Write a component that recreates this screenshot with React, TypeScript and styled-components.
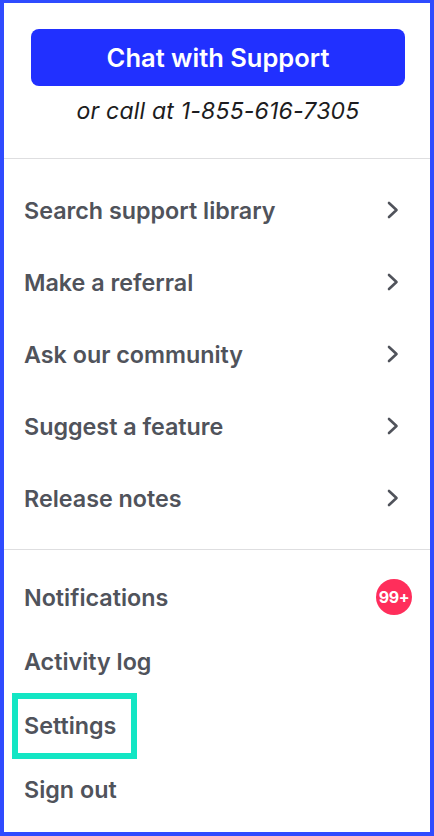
import React from 'react';
import styled, { createGlobalStyle } from 'styled-components';

const GlobalStyle = createGlobalStyle`
  *, *::before, *::after { box-sizing: border-box; }
  html, body { margin: 0; padding: 0; background: #fff; }
  body { font-family: Inter, "Noto Sans", "Liberation Sans", sans-serif; }
`;

const Panel = styled.div`
  width: 434px;
  height: 836px;
  overflow: hidden;
  border: 4px solid #2f4bff;
  border-top-width: 3px;
  background: #fff;
  display: flex;
  flex-direction: column;
`;

const Top = styled.div`
  flex: none;
  padding: 26px 25px 0 27px;
  height: 156px;
  display: flex;
  flex-direction: column;
  align-items: center;
  border-bottom: 1px solid #dedee0;
`;

const ChatButton = styled.button`
  width: 374px;
  height: 57px;
  flex: none;
  border: none;
  border-radius: 8px;
  background: #2130ff;
  color: #fff;
  font-family: inherit;
  font-size: 25.5px;
  font-weight: 600;
  cursor: pointer;
`;

const Phone = styled.p`
  margin: 10px 0 0;
  font-size: 23px;
  line-height: 30px;
  font-style: italic;
  color: #1c1c20;
  letter-spacing: 0.2px;
`;

const List = styled.nav<{ $divided?: boolean }>`
  flex: none;
  display: flex;
  flex-direction: column;
  padding: 15px 0 ${(p) => (p.$divided ? '15px' : '0')};
  border-bottom: ${(p) => (p.$divided ? '1px solid #dedee0' : 'none')};
`;

const Row = styled.a<{ $height: number; $highlight?: boolean }>`
  position: relative;
  height: ${(p) => p.$height}px;
  display: flex;
  align-items: center;
  justify-content: space-between;
  padding: 0 18px 0 20px;
  color: #50535b;
  font-size: 23.3px;
  font-weight: 600;
  text-decoration: none;
  cursor: pointer;

  &::after {
    content: '';
    display: ${(p) => (p.$highlight ? 'block' : 'none')};
    position: absolute;
    left: 8px;
    top: 0;
    width: 125px;
    height: 66px;
    border: 6px solid #13e6c4;
  }
`;

const Chevron = styled.svg`
  margin-right: 12px;
  flex: none;
`;

const Badge = styled.span`
  width: 36px;
  height: 36px;
  border-radius: 50%;
  background: #ff2e5b;
  color: #fff;
  font-size: 16px;
  font-weight: 700;
  display: flex;
  align-items: center;
  justify-content: center;
  letter-spacing: -0.3px;
`;

const ChevronRight = () => (
  <Chevron width="14" height="20" viewBox="0 0 14 20" fill="none">
    <path d="M3 3 L10.5 10 L3 17" stroke="#50535b" strokeWidth="2.6" strokeLinecap="round" strokeLinejoin="round" />
  </Chevron>
);

const supportLinks = [
  'Search support library',
  'Make a referral',
  'Ask our community',
  'Suggest a feature',
  'Release notes',
];

export default function App() {
  return (
    <>
      <GlobalStyle />
      <Panel>
        <Top>
          <ChatButton>Chat with Support</ChatButton>
          <Phone>or call at 1-855-616-7305</Phone>
        </Top>
        <List $divided>
          {supportLinks.map((label) => (
            <Row key={label} $height={72}>
              <span>{label}</span>
              <ChevronRight />
            </Row>
          ))}
        </List>
        <List>
          <Row $height={64}>
            <span>Notifications</span>
            <Badge>99+</Badge>
          </Row>
          <Row $height={64}>
            <span>Activity log</span>
          </Row>
          <Row $height={64} $highlight>
            <span>Settings</span>
          </Row>
          <Row $height={64}>
            <span>Sign out</span>
          </Row>
        </List>
      </Panel>
    </>
  );
}
